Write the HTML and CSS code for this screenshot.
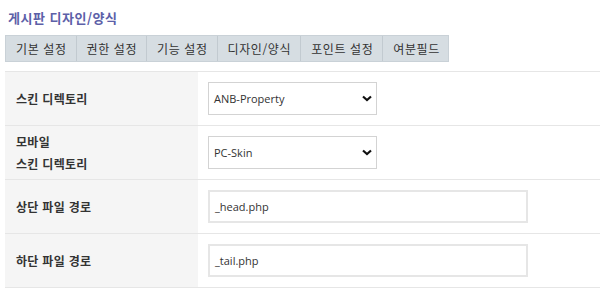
FILE: index.html
```html
<!DOCTYPE html>
<html lang="ko">
<head>
    <meta charset="UTF-8">
    <title>게시판 디자인/양식</title>
    <link rel="stylesheet" href="styles.css">
</head>
<body>
    <h2 class="page-title">게시판 디자인/양식</h2>
    <ul class="tabs">
        <li class="tab">기본 설정</li>
        <li class="tab">권한 설정</li>
        <li class="tab">기능 설정</li>
        <li class="tab">디자인/양식</li>
        <li class="tab">포인트 설정</li>
        <li class="tab">여분필드</li>
    </ul>
    <table class="form-table">
        <tr>
            <th>스킨 디렉토리</th>
            <td>
                <div class="select">
                    <span>ANB-Property</span>
                    <svg width="10" height="7" viewBox="0 0 10 7"><path d="M1 1.5 L5 5 L9 1.5" fill="none" stroke="#111" stroke-width="2.2"/></svg>
                </div>
            </td>
        </tr>
        <tr>
            <th>모바일<br>스킨 디렉토리</th>
            <td>
                <div class="select">
                    <span>PC-Skin</span>
                    <svg width="10" height="7" viewBox="0 0 10 7"><path d="M1 1.5 L5 5 L9 1.5" fill="none" stroke="#111" stroke-width="2.2"/></svg>
                </div>
            </td>
        </tr>
        <tr>
            <th>상단 파일 경로</th>
            <td><div class="input">_head.php</div></td>
        </tr>
        <tr>
            <th>하단 파일 경로</th>
            <td><div class="input">_tail.php</div></td>
        </tr>
    </table>
</body>
</html>
```
FILE: styles.css
```css
body {
    margin: 0;
    padding: 0 0 0 5px;
    background: #fff;
    font-family: "Noto Sans CJK KR", sans-serif;
    color: #333;
}

.page-title {
    margin: 0;
    padding: 9px 0 0 3px;
    height: 26px;
    font-size: 13px;
    font-weight: bold;
    letter-spacing: 0.5px;
    color: #5c60a8;
    line-height: 18px;
}

.tabs {
    display: flex;
    list-style: none;
    margin: 0;
    padding: 0;
    width: 444px;
    height: 27px;
    background: #d6dde2;
    border: 1px solid #c9d1d7;
    box-sizing: border-box;
}

.tab {
    padding: 0 9px 0 10px;
    font-size: 12px;
    letter-spacing: 0.6px;
    line-height: 26px;
    color: #333;
    border-right: 1px solid #c2cad0;
    white-space: nowrap;
}

.tab:last-child {
    border-right: none;
    flex: 1;
}

.form-table {
    margin-top: 9px;
    width: 595px;
    border-collapse: collapse;
    border-top: 1px solid #e6e6e6;
}

.form-table th {
    width: 193px;
    height: 54px;
    padding: 0 0 0 11px;
    box-sizing: border-box;
    background: #f5f5f5;
    text-align: left;
    font-size: 12px;
    font-weight: bold;
    letter-spacing: 0.3px;
    line-height: 22px;
    color: #333;
    border-bottom: 1px solid #e6e6e6;
}

.form-table td {
    padding: 0 0 0 10px;
    border-bottom: 1px solid #e6e6e6;
}

.select {
    display: flex;
    align-items: center;
    justify-content: space-between;
    width: 169px;
    height: 33px;
    padding: 0 4px 0 5px;
    box-sizing: border-box;
    border: 1px solid #d3d3d3;
    font-family: "Open Sans", "Noto Sans CJK KR", sans-serif;
    font-size: 11px;
    color: #333;
}

.input {
    width: 320px;
    height: 33px;
    padding: 0 5px;
    box-sizing: border-box;
    border: 2px solid #e6e6e6;
    font-family: "Open Sans", "Noto Sans CJK KR", sans-serif;
    font-size: 11px;
    line-height: 29px;
    color: #333;
}
```
